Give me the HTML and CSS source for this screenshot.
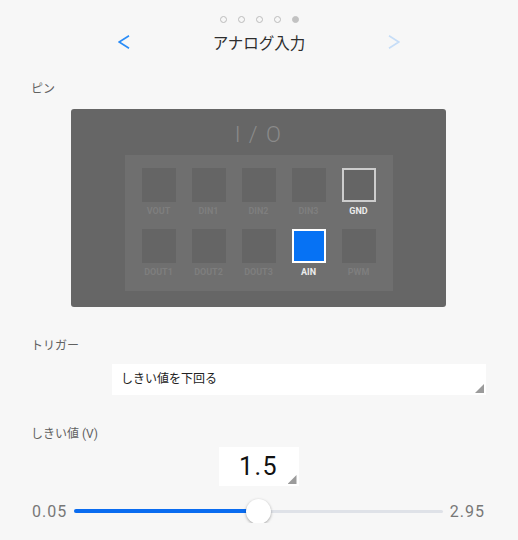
FILE: index.html
```html
<!DOCTYPE html>
<html lang="ja">
<head>
  <meta charset="UTF-8" />
  <title>アナログ入力</title>
  <link rel="stylesheet" href="styles.css">
</head>
<body>

  <div class="dots">
    <span class="dot"></span>
    <span class="dot"></span>
    <span class="dot"></span>
    <span class="dot"></span>
    <span class="dot active"></span>
  </div>

  <div class="nav">
    <svg class="chevron back" width="12" height="14" viewBox="0 0 12 14">
      <polyline points="11,0.8 1.2,7 11,13.2" />
    </svg>
    <div class="title">アナログ入力</div>
    <svg class="chevron next" width="12" height="14" viewBox="0 0 12 14">
      <polyline points="1,0.8 10.8,7 1,13.2" />
    </svg>
  </div>

  <div class="section">
    <div class="label">ピン</div>

    <div class="panel">
      <div class="panel-title">I / O</div>
      <div class="pins">
        <div class="pin"><div class="pad"></div><div class="pin-name">VOUT</div></div>
        <div class="pin"><div class="pad"></div><div class="pin-name">DIN1</div></div>
        <div class="pin"><div class="pad"></div><div class="pin-name">DIN2</div></div>
        <div class="pin"><div class="pad"></div><div class="pin-name">DIN3</div></div>
        <div class="pin"><div class="pad ground"></div><div class="pin-name on">GND</div></div>
        <div class="pin"><div class="pad"></div><div class="pin-name">DOUT1</div></div>
        <div class="pin"><div class="pad"></div><div class="pin-name">DOUT2</div></div>
        <div class="pin"><div class="pad"></div><div class="pin-name">DOUT3</div></div>
        <div class="pin"><div class="pad selected"></div><div class="pin-name on">AIN</div></div>
        <div class="pin"><div class="pad"></div><div class="pin-name">PWM</div></div>
      </div>
    </div>

    <div class="label trigger-label">トリガー</div>
    <div class="select">しきい値を下回る</div>

    <div class="label threshold-label">しきい値 (V)</div>
    <div class="number-box">1.5</div>

    <div class="slider-row">
      <span class="slider-value">0.05</span>
      <div class="track">
        <div class="fill" style="width: 50%"></div>
        <div class="thumb" style="left: 50%"></div>
      </div>
      <span class="slider-value">2.95</span>
    </div>
  </div>

</body>
</html>
```

FILE: styles.css
```css
body {
  margin: 0;
  background: #f7f7f7;
  font-family: Roboto, "Noto Sans CJK JP", sans-serif;
  color: #333;
}

/* page dots */
.dots {
  display: flex;
  justify-content: center;
  gap: 11px;
  padding-top: 16px;
}

.dot {
  width: 7px;
  height: 7px;
  box-sizing: border-box;
  border: 1px solid #bcbcbc;
  border-radius: 50%;
}

.dot.active {
  background: #c2c2c2;
  border-color: #c2c2c2;
}

/* header */
.nav {
  width: 282px;
  height: 26px;
  margin: 6px auto 0;
  display: flex;
  align-items: center;
  justify-content: space-between;
}

.chevron polyline {
  fill: none;
  stroke-width: 1.6;
}

.back polyline {
  stroke: #2a8cf7;
}

.next polyline {
  stroke: #c6ddf7;
}

.title {
  font-size: 15.5px;
  color: #2e2e2e;
}

.section {
  padding: 0 32px 0 31px;
}

.label {
  font-size: 12px;
  line-height: 16px;
  color: #616161;
  margin-top: 26px;
}

/* I/O panel */
.panel {
  width: 375px;
  height: 198px;
  box-sizing: border-box;
  margin: 12px auto 0;
  padding-top: 11px;
  background: #666;
  border-radius: 3px;
}

.panel-title {
  text-align: center;
  font-size: 22px;
  font-weight: 300;
  line-height: 30px;
  letter-spacing: 1.5px;
  color: #8b8b8b;
}

.pins {
  width: fit-content;
  margin: 5px auto 0;
  padding: 13px 17px 10px;
  background: #6f6f6f;
  display: grid;
  grid-template-columns: repeat(5, 34px);
  column-gap: 16px;
  row-gap: 9px;
}

.pad {
  width: 34px;
  height: 34px;
  box-sizing: border-box;
  background: #656565;
}

.pad.ground {
  border: 2px solid #cdcdcd;
}

.pad.selected {
  background: #0672f4;
  border: 2px solid #fff;
}

.pin-name {
  margin: 0 -10px;
  text-align: center;
  font-size: 9px;
  font-weight: 700;
  line-height: 18px;
  color: #7e7e7e;
}

.pin-name.on {
  color: #ececec;
}

/* trigger */
.trigger-label {
  margin-top: 31px;
}

.select {
  width: 374px;
  height: 31px;
  box-sizing: border-box;
  margin: 10px 0 0 auto;
  padding-left: 9px;
  background: #fff;
  font-size: 12px;
  line-height: 31px;
  color: #222;
  position: relative;
}

.select::after,
.number-box::after {
  content: "";
  position: absolute;
  right: 2px;
  bottom: 2px;
  width: 9px;
  height: 9px;
  background: #9b9b9b;
  clip-path: polygon(100% 0, 100% 100%, 0 100%);
}

/* threshold */
.threshold-label {
  margin-top: 31px;
}

.number-box {
  width: 80px;
  height: 39px;
  margin: 5px auto 0;
  background: #fff;
  text-align: center;
  font-size: 25px;
  line-height: 39px;
  letter-spacing: 1.5px;
  color: #111;
  position: relative;
}

.slider-row {
  display: flex;
  align-items: center;
  gap: 7px;
  height: 24px;
  margin: 13px 1px 0 1px;
}

.slider-value {
  font-size: 16px;
  letter-spacing: 1px;
  color: #777;
}

.track {
  flex: 1;
  height: 3px;
  background: #dfe2e8;
  border-radius: 2px;
  position: relative;
}

.fill {
  height: 4px;
  margin-top: -0.5px;
  background: #0a6cf0;
  border-radius: 2px;
}

.thumb {
  position: absolute;
  top: 50%;
  width: 25px;
  height: 25px;
  margin: -12.5px 0 0 -12.5px;
  background: #fff;
  border-radius: 50%;
  box-shadow: 0 1px 3px rgba(0, 0, 0, 0.35);
}
```
